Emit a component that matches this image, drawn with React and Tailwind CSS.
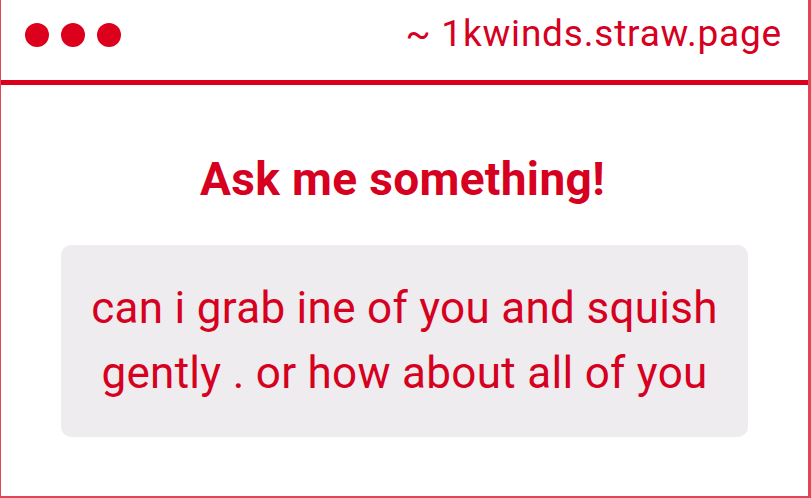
export default function App() {
  return (
    <div
      className="w-[811px] h-[498px] bg-white border-l border-r-[3px] border-b-2 border-[#e04654] flex flex-col overflow-hidden"
      style={{ fontFamily: 'Roboto, "Liberation Sans", sans-serif' }}
    >
      <div className="h-[85px] shrink-0 border-b-[5px] border-[#dc001c] flex items-center justify-between pl-[24px] pr-[26px]">
        <div className="flex gap-[12px] mb-[10px]">
          <div className="w-6 h-6 rounded-full bg-[#dc001c]" />
          <div className="w-6 h-6 rounded-full bg-[#dc001c]" />
          <div className="w-6 h-6 rounded-full bg-[#dc001c]" />
        </div>
        <div className="text-[37px] leading-none tracking-[0.8px] text-[#d6001f] mb-[14px]">~ 1kwinds.straw.page</div>
      </div>
      <div className="flex flex-col items-center">
        <h1 className="mt-[71px] mr-[4px] text-[46px] leading-none tracking-[0.35px] font-bold text-[#d6001f]">Ask me something!</h1>
        <div className="mt-[43px] self-stretch mx-[60px] rounded-[10px] bg-[#eeecee] py-[31px] px-4 text-center text-[44px] leading-[1.48] tracking-[0.3px] text-[#d6001f]">
          can i grab ine of you and squish
          <br />
          gently . or how about all of you
        </div>
      </div>
    </div>
  );
}
